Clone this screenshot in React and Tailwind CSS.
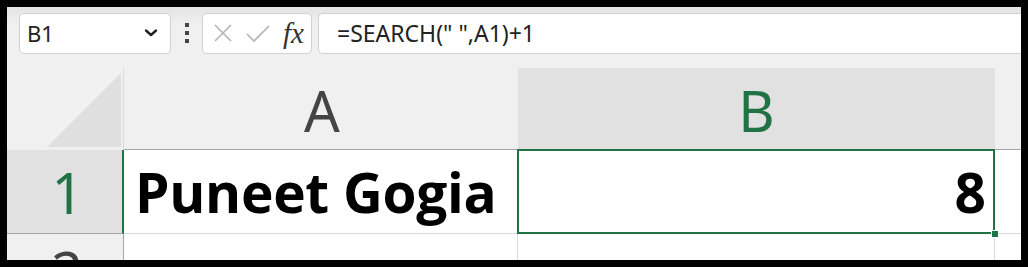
import React from "react";

const green = "#217346";

const NameBox = () => (
  <div className="flex h-[41px] w-[152px] items-center justify-between rounded-[5px] border border-[#d1d1d1] bg-white pl-[7px] pr-[12px]">
    <span className="text-[22px] leading-none text-[#222]" style={{ fontFamily: "'Noto Sans', sans-serif" }}>
      B1
    </span>
    <svg width="14" height="10" viewBox="0 0 14 10">
      <path d="M2 2.5 L7 7 L12 2.5" fill="none" stroke="#222" strokeWidth="2.4" strokeLinecap="round" strokeLinejoin="round" />
    </svg>
  </div>
);

const Dots = () => (
  <div className="flex w-[31px] flex-col items-center gap-[4px]">
    <span className="h-[4px] w-[4px] bg-[#444]" />
    <span className="h-[4px] w-[4px] bg-[#444]" />
    <span className="h-[4px] w-[4px] bg-[#444]" />
  </div>
);

const FormulaButtons = () => (
  <div className="flex h-[41px] w-[110px] items-center rounded-[5px] border border-[#d1d1d1] bg-white pl-[10px]">
    <svg width="20" height="20" viewBox="0 0 20 20">
      <path d="M2 2 L18 18 M18 2 L2 18" stroke="#b3b3b3" strokeWidth="1.6" />
    </svg>
    <svg width="26" height="20" viewBox="0 0 26 20" className="ml-[12px]">
      <path d="M2 11 L9 18 L24 3" fill="none" stroke="#b3b3b3" strokeWidth="1.6" />
    </svg>
    <span
      className="ml-[12px] text-[29px] italic leading-none text-[#333]"
      style={{ fontFamily: "'Liberation Serif', serif" }}
    >
      fx
    </span>
  </div>
);

const FormulaBar = () => (
  <div className="flex h-[41px] flex-1 items-center rounded-l-[5px] border border-r-0 border-[#d1d1d1] bg-white pl-[18px]">
    <span className="text-[23px] leading-none text-[#222]" style={{ fontFamily: "'Noto Sans', sans-serif" }}>
      =SEARCH(" ",A1)+1
    </span>
  </div>
);

const Corner = () => (
  <div className="relative border-r border-[#dadada] bg-[#f0f0f0]">
    <svg className="absolute left-[40px] top-[5px]" width="75" height="75" viewBox="0 0 75 75">
      <polygon points="0,74 74,74 74,0" fill="#dfdfdf" />
    </svg>
  </div>
);

export default function App() {
  const font = { fontFamily: "'Noto Sans', sans-serif" };
  return (
    <div className="h-[267px] w-[1028px] overflow-hidden bg-black pl-[7px] pt-[7px]">
      <div className="flex h-[253px] w-[1014px] flex-col overflow-hidden bg-[#f0f0f0]">
        <div className="flex h-[61px] items-center bg-gradient-to-b from-[#e4e4e4] via-[#f0f0f0] via-30% to-[#f0f0f0] pb-[10px] pl-[12px] pt-[1px]">
          <NameBox />
          <Dots />
          <FormulaButtons />
          <div className="w-[6px]" />
          <FormulaBar />
        </div>

        <div className="grid grid-cols-[117px_394px_477px_26px] grid-rows-[82px_84px_26px]" style={font}>
          <Corner />
          <div className="flex items-center justify-center border-b border-[#a6a6a6] bg-[#f0f0f0] pl-[2px] pt-[2px]">
            <span className="text-[56px] leading-none text-[#444]">A</span>
          </div>
          <div className="flex items-center justify-center border-b border-[#a6a6a6] bg-[#e1e1e1] pt-[2px]">
            <span className="text-[56px] leading-none" style={{ color: green }}>B</span>
          </div>
          <div className="border-b border-[#a6a6a6] bg-[#f0f0f0]" />

          <div className="flex items-center justify-center border-b border-[#a6a6a6] border-r-2 border-r-[#217346] bg-[#e1e1e1] pl-[6px]">
            <span className="text-[56px] leading-none" style={{ color: green }}>1</span>
          </div>
          <div className="flex items-center border-b border-r border-[#dadada] bg-white pl-[11px]">
            <span className="whitespace-nowrap text-[55px] font-bold leading-none text-black" style={{ fontFamily: "'Open Sans', sans-serif", letterSpacing: "-0.3px" }}>
              Puneet Gogia
            </span>
          </div>
          <div className="relative flex items-center justify-end border-b border-r border-[#dadada] bg-white pr-[8px]">
            <span className="text-[55px] font-bold leading-none text-black" style={{ fontFamily: "'Open Sans', sans-serif" }}>
              8
            </span>
            <div className="absolute -left-px -top-px bottom-[-1px] right-[-1px] border-2 border-[#217346]" />
            <div className="absolute bottom-[-4px] right-[-4px] h-[6px] w-[6px] bg-[#217346] outline outline-1 outline-white" />
          </div>
          <div className="border-b border-[#dadada] bg-white" />

          <div className="relative overflow-hidden border-r border-[#a6a6a6] bg-[#f0f0f0]">
            <span className="absolute left-[44px] top-[9px] text-[56px] leading-none text-[#444]">2</span>
          </div>
          <div className="border-r border-[#dadada] bg-white" />
          <div className="border-r border-[#dadada] bg-white" />
          <div className="bg-white" />
        </div>
      </div>
    </div>
  );
}
